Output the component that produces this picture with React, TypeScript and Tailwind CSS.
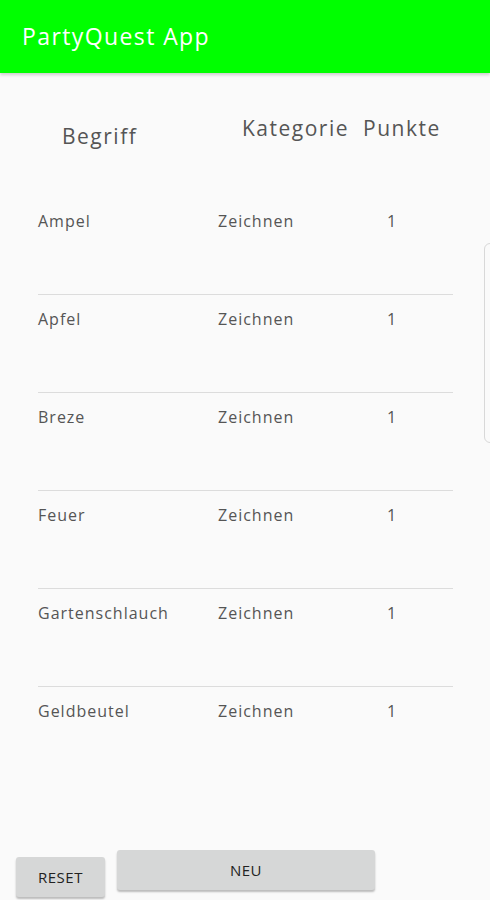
import React from "react";

const rows = [
  { begriff: "Ampel", kategorie: "Zeichnen", punkte: 1 },
  { begriff: "Apfel", kategorie: "Zeichnen", punkte: 1 },
  { begriff: "Breze", kategorie: "Zeichnen", punkte: 1 },
  { begriff: "Feuer", kategorie: "Zeichnen", punkte: 1 },
  { begriff: "Gartenschlauch", kategorie: "Zeichnen", punkte: 1 },
  { begriff: "Geldbeutel", kategorie: "Zeichnen", punkte: 1 },
];

const font = { fontFamily: '"Open Sans", "Noto Sans", sans-serif' };

export default function App() {
  return (
    <div className="relative w-[490px] h-[900px] overflow-hidden bg-[#fafafa] flex flex-col" style={font}>
      {/* Toolbar */}
      <div className="h-[73px] shrink-0 bg-[#00ff00] flex items-center pl-[22px] shadow-[0_2px_3px_rgba(0,0,0,0.18)]">
        <h1 className="text-white text-[23px] tracking-[1.4px] pb-[1px]">PartyQuest App</h1>
      </div>

      {/* Kopfzeile */}
      <div className="h-[124px] shrink-0 flex items-start pt-[40px] text-[#555] text-[21px] tracking-[1.5px]">
        <span className="ml-[62px] mt-[8px] w-[180px]">Begriff</span>
        <span className="w-[121px]">Kategorie</span>
        <span>Punkte</span>
      </div>

      {/* Liste */}
      <div className="ml-[38px] w-[415px]">
        {rows.map((row, i) => (
          <div
            key={row.begriff}
            className={`h-[98px] flex items-start pt-[12px] text-[16px] tracking-[1px] text-[#555] ${
              i < rows.length - 1 ? "border-b border-[#dcdcdc]" : ""
            }`}
          >
            <span className="w-[180px]">{row.begriff}</span>
            <span className="w-[169px]">{row.kategorie}</span>
            <span>{row.punkte}</span>
          </div>
        ))}
      </div>

      <div className="flex-1" />

      {/* Buttons */}
      <div className="h-[50px] shrink-0 flex items-start gap-[12px] pl-[16px] text-[15px] tracking-[0.5px] text-[#222]">
        <button className="mt-[7px] w-[89px] h-[40px] bg-[#d6d7d7] rounded-[3px] shadow-[0_2px_2px_rgba(0,0,0,0.25)] uppercase">
          Reset
        </button>
        <button className="w-[258px] h-[40px] bg-[#d6d7d7] rounded-[3px] shadow-[0_2px_2px_rgba(0,0,0,0.25)] uppercase">
          Neu
        </button>
      </div>

      {/* Edge-Griff (Overlay am rechten Rand) */}
      <div className="absolute left-[484px] top-[243px] w-[12px] h-[200px] border border-[#d8d8d8] rounded-[6px] bg-[#fafafa]" />
    </div>
  );
}
